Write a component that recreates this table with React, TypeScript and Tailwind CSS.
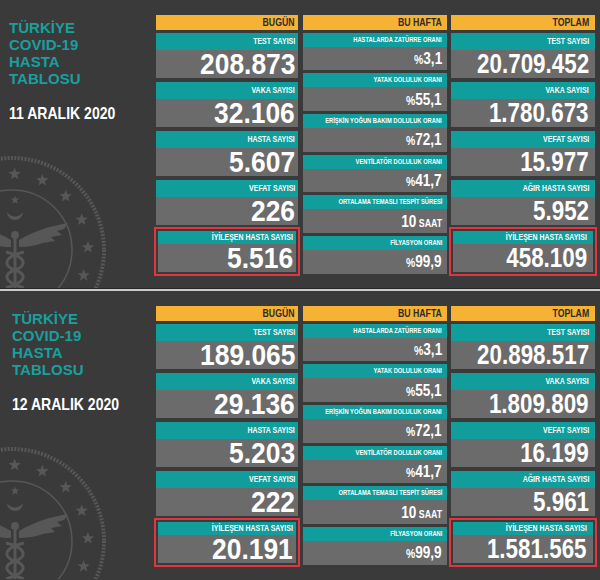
import clsx from 'clsx';

interface Stat {
  label: string;
  value: string;
  highlight?: boolean;
}

interface WeekStat {
  label: string;
  value: string;
  unit: 'pct' | 'saat';
}

interface PanelData {
  date: string;
  today: Stat[];
  week: WeekStat[];
  total: Stat[];
}

const week: WeekStat[] = [
  { label: 'HASTALARDA ZATÜRRE ORANI', value: '3,1', unit: 'pct' },
  { label: 'YATAK DOLULUK ORANI', value: '55,1', unit: 'pct' },
  { label: 'ERİŞKİN YOĞUN BAKIM DOLULUK ORANI', value: '72,1', unit: 'pct' },
  { label: 'VENTİLATÖR DOLULUK ORANI', value: '41,7', unit: 'pct' },
  { label: 'ORTALAMA TEMASLI TESPİT SÜRESİ', value: '10', unit: 'saat' },
  { label: 'FİLYASYON ORANI', value: '99,9', unit: 'pct' },
];

const panels: PanelData[] = [
  {
    date: '11 ARALIK 2020',
    today: [
      { label: 'TEST SAYISI', value: '208.873' },
      { label: 'VAKA SAYISI', value: '32.106' },
      { label: 'HASTA SAYISI', value: '5.607' },
      { label: 'VEFAT SAYISI', value: '226' },
      { label: 'İYİLEŞEN HASTA SAYISI', value: '5.516', highlight: true },
    ],
    week,
    total: [
      { label: 'TEST SAYISI', value: '20.709.452' },
      { label: 'VAKA SAYISI', value: '1.780.673' },
      { label: 'VEFAT SAYISI', value: '15.977' },
      { label: 'AĞIR HASTA SAYISI', value: '5.952' },
      { label: 'İYİLEŞEN HASTA SAYISI', value: '458.109', highlight: true },
    ],
  },
  {
    date: '12 ARALIK 2020',
    today: [
      { label: 'TEST SAYISI', value: '189.065' },
      { label: 'VAKA SAYISI', value: '29.136' },
      { label: 'HASTA SAYISI', value: '5.203' },
      { label: 'VEFAT SAYISI', value: '222' },
      { label: 'İYİLEŞEN HASTA SAYISI', value: '20.191', highlight: true },
    ],
    week,
    total: [
      { label: 'TEST SAYISI', value: '20.898.517' },
      { label: 'VAKA SAYISI', value: '1.809.809' },
      { label: 'VEFAT SAYISI', value: '16.199' },
      { label: 'AĞIR HASTA SAYISI', value: '5.961' },
      { label: 'İYİLEŞEN HASTA SAYISI', value: '1.581.565', highlight: true },
    ],
  },
];

const star = (cx: number, cy: number, R: number, r: number) => {
  const pts: string[] = [];
  for (let i = 0; i < 10; i++) {
    const a = (Math.PI / 5) * i - Math.PI / 2;
    const rad = i % 2 === 0 ? R : r;
    pts.push(`${(cx + rad * Math.cos(a)).toFixed(2)},${(cy + rad * Math.sin(a)).toFixed(2)}`);
  }
  return pts.join(' ');
};

// faded ministry seal behind the title
const Emblem = () => {
  const cx = 12;
  const cy = 250;
  const angles = [-88, -66.5, -45, -23.5, -2, 19.5, 41];
  return (
    <svg className="pointer-events-none absolute left-0 top-0" width="160" height="288" viewBox="0 0 160 288">
      <g fill="#575757" stroke="none">
        <circle cx={cx} cy={cy} r="92" fill="none" stroke="#575757" strokeWidth="4" strokeDasharray="2 1.4" />
        <circle cx={cx} cy={cy} r="60" fill="none" stroke="#575757" strokeWidth="1.5" />
        {angles.map((deg) => {
          const a = (deg * Math.PI) / 180;
          return <polygon key={deg} points={star(cx + 76 * Math.cos(a), cy + 76 * Math.sin(a), 6.5, 2.7)} />;
        })}
        <polygon points={star(15, 200, 4.5, 1.9)} />
        <path d="M 7 212 A 8 8 0 0 0 23 212 A 9.5 9.5 0 0 1 7 212 Z" />
        <circle cx="15" cy="235" r="4" />
        <path d="M 19 240 C 34 231 50 226 68 223 L 64 229 L 57 231 L 62 235 L 51 237 L 55 241 L 43 243 C 34 246 26 247 19 247 Z" />
        <path d="M 11 240 C -4 231 -20 226 -38 223 L -34 229 L -27 231 L -32 235 L -21 237 L -25 241 L -13 243 C -4 246 4 247 11 247 Z" />
        <rect x="13.5" y="236" width="3" height="60" />
      </g>
      <g fill="none" stroke="#575757" strokeWidth="3">
        <path d="M 6 252 C 27 257 27 266 15 270 C 3 274 3 282 24 288" />
        <path d="M 24 252 C 3 257 3 266 15 270 C 27 274 27 282 6 288" />
      </g>
    </svg>
  );
};

const HeaderBar = ({ title, pr }: { title: string; pr: string }) => (
  <div className={clsx('flex h-[15px] shrink-0 items-center justify-end bg-[#f6b234]', pr)}>
    <span className="inline-block origin-right scale-x-[0.83] whitespace-nowrap text-[10.5px] leading-none text-[#2b2b2b]">
      {title}
    </span>
  </div>
);

const BigCard = ({ stat, kind }: { stat: Stat; kind: 'today' | 'total' }) => (
  <div
    className={clsx(
      'flex flex-1 flex-col',
      stat.highlight && 'border-2 border-[#3a3a3a] outline-2 outline-[#e2353f]'
    )}
  >
    <div
      className={clsx(
        'flex shrink-0 items-center justify-end bg-[#109d9b]',
        stat.highlight ? 'h-[13px]' : 'h-[17px]',
        kind === 'today' ? 'pr-[3px]' : 'pr-[6px]'
      )}
    >
      <span className="inline-block origin-right scale-x-[0.82] whitespace-nowrap text-[8.5px] leading-none text-white">
        {stat.label}
      </span>
    </div>
    <div
      className={clsx(
        'flex flex-1 items-start justify-end bg-[#6b6b6b]',
        kind === 'today' ? 'pr-[3px]' : 'pr-[6px]'
      )}
    >
      {kind === 'today' ? (
        <span className="inline-block origin-right scale-x-[0.88] whitespace-nowrap text-[30px] leading-[28px] text-white">
          {stat.value}
        </span>
      ) : (
        <span className="inline-block origin-right scale-x-[0.8] whitespace-nowrap text-[28px] leading-[28px] text-white">
          {stat.value}
        </span>
      )}
    </div>
  </div>
);

const WeekCard = ({ stat }: { stat: WeekStat }) => (
  <div className="flex flex-1 flex-col">
    <div className="flex h-[14px] shrink-0 items-center justify-end bg-[#109d9b] pr-[5px]">
      <span className="inline-block origin-right scale-x-[0.72] whitespace-nowrap text-[8px] leading-none text-white">
        {stat.label}
      </span>
    </div>
    <div className="flex flex-1 items-center justify-end bg-[#6b6b6b] pr-[5px]">
      <span className="inline-block origin-right scale-x-[0.8] whitespace-nowrap leading-none text-white">
        {stat.unit === 'pct' ? (
          <>
            <span className="text-[13px]">%</span>
            <span className="text-[17px]">{stat.value}</span>
          </>
        ) : (
          <>
            <span className="text-[17px]">{stat.value}</span>
            <span className="text-[11px]"> SAAT</span>
          </>
        )}
      </span>
    </div>
  </div>
);

const Panel = ({ data, height, pl }: { data: PanelData; height: string; pl: string }) => (
  <div className={clsx('relative flex overflow-hidden bg-[#3a3a3a] pt-[15px]', height)}>
    <Emblem />
    <div className={clsx('relative w-[156px] shrink-0 pt-[4px]', pl)}>
      <div className="flex flex-col text-[15.5px] leading-[17px] text-[#199f9e]">
        {['TÜRKİYE', 'COVID-19', 'HASTA', 'TABLOSU'].map((line) => (
          <span key={line} className="block h-[17px] origin-left scale-x-[0.97] whitespace-nowrap">
            {line}
          </span>
        ))}
      </div>
      <div className="mt-[17.5px] text-[16.5px] leading-[16.5px] text-white">
        <span className="inline-block origin-left scale-x-[0.85] whitespace-nowrap">{data.date}</span>
      </div>
    </div>

    <div className="relative flex w-[142px] shrink-0 flex-col gap-[2.5px]">
      <HeaderBar title="BUGÜN" pr="pr-[4px]" />
      <div className="flex h-[241px] flex-col gap-[4px]">
        {data.today.map((s) => (
          <BigCard key={s.label} stat={s} kind="today" />
        ))}
      </div>
    </div>

    <div className="relative ml-[5px] flex w-[144px] shrink-0 flex-col gap-[2.5px]">
      <HeaderBar title="BU HAFTA" pr="pr-[5px]" />
      <div className="flex h-[241px] flex-col gap-[3px]">
        {data.week.map((s) => (
          <WeekCard key={s.label} stat={s} />
        ))}
      </div>
    </div>

    <div className="relative ml-[4px] flex w-[144px] shrink-0 flex-col gap-[2.5px]">
      <HeaderBar title="TOPLAM" pr="pr-[6px]" />
      <div className="flex h-[241px] flex-col gap-[4px]">
        {data.total.map((s) => (
          <BigCard key={s.label} stat={s} kind="total" />
        ))}
      </div>
    </div>
  </div>
);

export default function App() {
  return (
    <div className="h-[580px] w-[600px] overflow-hidden bg-[#3a3a3a] font-['Liberation_Sans',Arial,sans-serif] font-bold">
      <Panel data={panels[0]} height="h-[288px]" pl="pl-[9px]" />
      <div className="h-[3px] border-t border-[#262626] bg-[#c9c9c9]" />
      <Panel data={panels[1]} height="h-[289px]" pl="pl-[12px]" />
    </div>
  );
}
